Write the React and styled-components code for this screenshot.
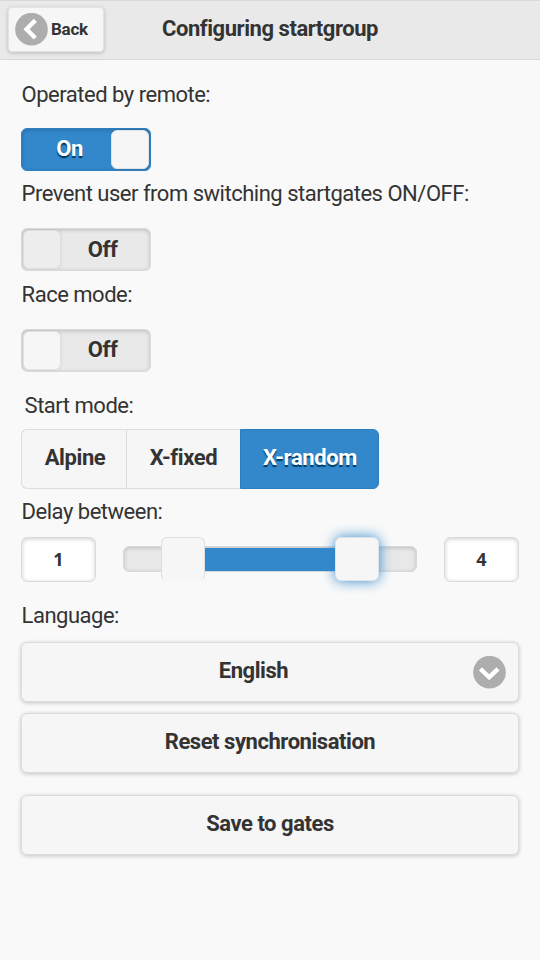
import React from 'react';
import styled, { createGlobalStyle, css } from 'styled-components';

const GlobalStyle = createGlobalStyle`
  * { box-sizing: border-box; }
  body {
    margin: 0;
    background: #f9f9f9;
    color: #333;
    font-family: Roboto, "Liberation Sans", sans-serif;
    font-size: 22px;
  }
  button { font: inherit; color: inherit; padding: 0; margin: 0; }
`;

const Screen = styled.div`
  display: flex;
  flex-direction: column;
  min-height: 960px;
`;

const Header = styled.header`
  display: grid;
  grid-template-columns: 104px 1fr 104px;
  align-items: center;
  height: 60px;
  padding: 0 0 1px;
  background: #e9e9e9;
  border-top: 1px solid #d8d8d8;
  border-bottom: 1px solid #d8d8d8;
`;

const BackButton = styled.button`
  display: flex;
  align-items: center;
  gap: 3px;
  width: 96px;
  height: 45px;
  margin-left: 8px;
  padding-left: 6px;
  border: 1px solid #e4e4e4;
  border-radius: 4px;
  background: #f6f6f6;
  box-shadow: 0 1px 4px rgba(0, 0, 0, 0.2);
  font-size: 17px;
  font-weight: 700;
  letter-spacing: -0.25px;
`;

const BackText = styled.span`
  padding-bottom: 2px;
`;

const Title = styled.h1`
  margin: 0;
  padding-bottom: 2px;
  text-align: center;
  font-size: 22px;
  line-height: 30px;
  font-weight: 700;
  letter-spacing: -0.45px;
  text-shadow: 0 1px 0 #eee;
`;

const Content = styled.main`
  display: flex;
  flex-direction: column;
  align-items: flex-start;
  padding: 20px 21px;
`;

const Label = styled.div`
  height: 30px;
  line-height: 30px;
  margin-top: ${(p) => p.$top || 0}px;
  margin-left: ${(p) => p.$indent || 0.6}px;
  letter-spacing: -0.49px;
  white-space: nowrap;
`;

const Toggle = styled.button`
  display: flex;
  flex-direction: ${(p) => (p.$on ? 'row' : 'row-reverse')};
  align-items: center;
  width: 130px;
  height: 43px;
  margin-top: ${(p) => p.$top}px;
  padding: ${(p) => (p.$on ? '0 1px 0 0' : '0 0 0 1px')};
  border: 1px solid ${(p) => (p.$on ? '#2f80be' : '#dbdbdb')};
  border-radius: 6px;
  background: ${(p) => (p.$on ? '#3388cc' : '#e9e9e9')};
  box-shadow: inset 0 1px 4px rgba(0, 0, 0, 0.2);
`;

const ToggleText = styled.span`
  flex: 1;
  padding-right: ${(p) => (p.$on ? 0 : 6)}px;
  padding-left: ${(p) => (p.$on ? 6 : 0)}px;
  line-height: 40px;
  padding-bottom: ${(p) => (p.$dim ? 0 : 1)}px;
  text-align: center;
  font-weight: 700;
  letter-spacing: -0.4px;
  color: ${(p) => (p.$on ? '#fff' : '#333')};
  text-shadow: 0 ${(p) => (p.$on ? '1.5px 1px #003355' : '1px 0 #f3f3f3')};
`;

const ToggleKnob = styled.span`
  width: 38px;
  height: 39px;
  border: 1px solid ${(p) => (p.$dim ? '#dedede' : '#e2e2e2')};
  border-radius: 6px;
  background: ${(p) => (p.$dim ? '#ededed' : '#f6f6f6')};
  box-shadow: 0 0 3px rgba(0, 0, 0, 0.1);
`;

const Segments = styled.div`
  display: grid;
  grid-template-columns: 105px 114px 139px;
  width: 358px;
  height: 60px;
  margin-top: 8px;
`;

const Segment = styled.button`
  padding-bottom: 4px;
  border: 1px solid #dcdcdc;
  border-right-width: 0;
  background: #f6f6f6;
  font-weight: 700;
  letter-spacing: -0.38px;
  text-shadow: 0 1px 0 #f3f3f3;
  &:first-child { border-radius: 6px 0 0 6px; padding-left: 2px; }
  &:last-child { border-right-width: 1px; border-radius: 0 6px 6px 0; padding-left: 1px; }
  ${(p) => p.$active && css`
    border-color: #2c7dbd;
    background: #3388cc;
    color: #fff;
    text-shadow: 0 2px 1px #003a60;
  `}
`;

const RangeRow = styled.div`
  display: grid;
  grid-template-columns: 75px 294px 75px;
  justify-content: space-between;
  align-items: center;
  width: 498px;
  height: 45px;
  margin-top: 10px;
`;

const NumberBox = styled.div`
  height: 45px;
  border: 1px solid #dbdbdb;
  border-radius: 6px;
  background: #fff;
  box-shadow: inset 0 1px 4px rgba(0, 0, 0, 0.2);
  font: 700 18px/43px "Open Sans", "Noto Sans", sans-serif;
  text-align: center;
`;

const Track = styled.div`
  display: grid;
  grid-template-columns: 37px 44px 130px 44px 1fr;
  grid-template-rows: 24px;
  align-items: center;
  height: 26px;
  margin-top: -1px;
  border: 1px solid #d8d8d8;
  border-radius: 6px;
  background: #e8e8e8;
  box-shadow: inset 0 1px 4px rgba(0, 0, 0, 0.18);
`;

const TrackFill = styled.div`
  grid-column: 3;
  height: 23px;
  background: #3388cc;
`;

const Handle = styled.div`
  grid-column: ${(p) => p.$column};
  height: 44px;
  border: 1px solid #dedede;
  border-radius: 6px;
  background: #f6f6f6;
  ${(p) => p.$focused ? css`
    border-color: #dde5eb;
    box-shadow: 0 0 13px #3388cc;
  ` : css`
    border-bottom-color: #f6f6f6;
  `}
`;

const WideButton = styled.button`
  display: grid;
  grid-template-columns: ${(p) => (p.$select ? '0 1fr 33px' : '0 1fr 0')};
  align-items: center;
  width: 498px;
  height: 60px;
  margin-top: ${(p) => p.$top}px;
  padding: 0 12.5px;
  border: 1px solid #dcdcdc;
  border-radius: 6px;
  background: #f6f6f6;
  box-shadow: 0 1px 4px rgba(0, 0, 0, 0.22);
`;

const ButtonText = styled.span`
  grid-column: 2;
  padding-bottom: 3px;
  text-align: center;
  font-weight: 700;
  letter-spacing: -0.45px;
  text-shadow: 0 1px 0 #f3f3f3;
`;

const Disc = styled.svg`
  display: block;
  flex: none;
`;

function DiscIcon({ direction }) {
  return (
    <Disc width="33" height="33" viewBox="0 0 33 33">
      <circle cx="16.5" cy="16.2" r="16.3" fill="#adadad" />
      <path
        d={direction === 'left' ? 'M20.3 7.4L11.5 16.2L20.3 25' : 'M7.4 12.8L16.2 21.3L25 12.8'}
        fill="none"
        stroke="#fff"
        strokeWidth="4.4"
      />
    </Disc>
  );
}

function FlipSwitch({ on, dim, top }) {
  return (
    <Toggle type="button" role="switch" aria-checked={!!on} $on={on} $top={top}>
      <ToggleText $on={on} $dim={dim}>{on ? 'On' : 'Off'}</ToggleText>
      <ToggleKnob $dim={dim} />
    </Toggle>
  );
}

export default function App() {
  return (
    <>
      <GlobalStyle />
      <Screen>
        <Header>
          <BackButton type="button">
            <DiscIcon direction="left" />
            <BackText>Back</BackText>
          </BackButton>
          <Title>Configuring startgroup</Title>
        </Header>
        <Content>
          <Label>Operated by remote:</Label>
          <FlipSwitch on top={18} />
          <Label $top={8}>Prevent user from switching startgates ON/OFF:</Label>
          <FlipSwitch dim top={19} />
          <Label $top={9}>Race mode:</Label>
          <FlipSwitch top={19} />
          <Label $top={19} $indent={3.6}>Start mode:</Label>
          <Segments>
            <Segment type="button">Alpine</Segment>
            <Segment type="button">X-fixed</Segment>
            <Segment type="button" $active>X-random</Segment>
          </Segments>
          <Label $top={8}>Delay between:</Label>
          <RangeRow>
            <NumberBox>1</NumberBox>
            <Track>
              <Handle $column={2} />
              <TrackFill />
              <Handle $column={4} $focused />
            </Track>
            <NumberBox>4</NumberBox>
          </RangeRow>
          <Label $top={19}>Language:</Label>
          <WideButton type="button" $top={11} $select>
            <ButtonText>English</ButtonText>
            <DiscIcon direction="down" />
          </WideButton>
          <WideButton type="button" $top={11}>
            <ButtonText>Reset synchronisation</ButtonText>
          </WideButton>
          <WideButton type="button" $top={22}>
            <ButtonText>Save to gates</ButtonText>
          </WideButton>
        </Content>
      </Screen>
    </>
  );
}
